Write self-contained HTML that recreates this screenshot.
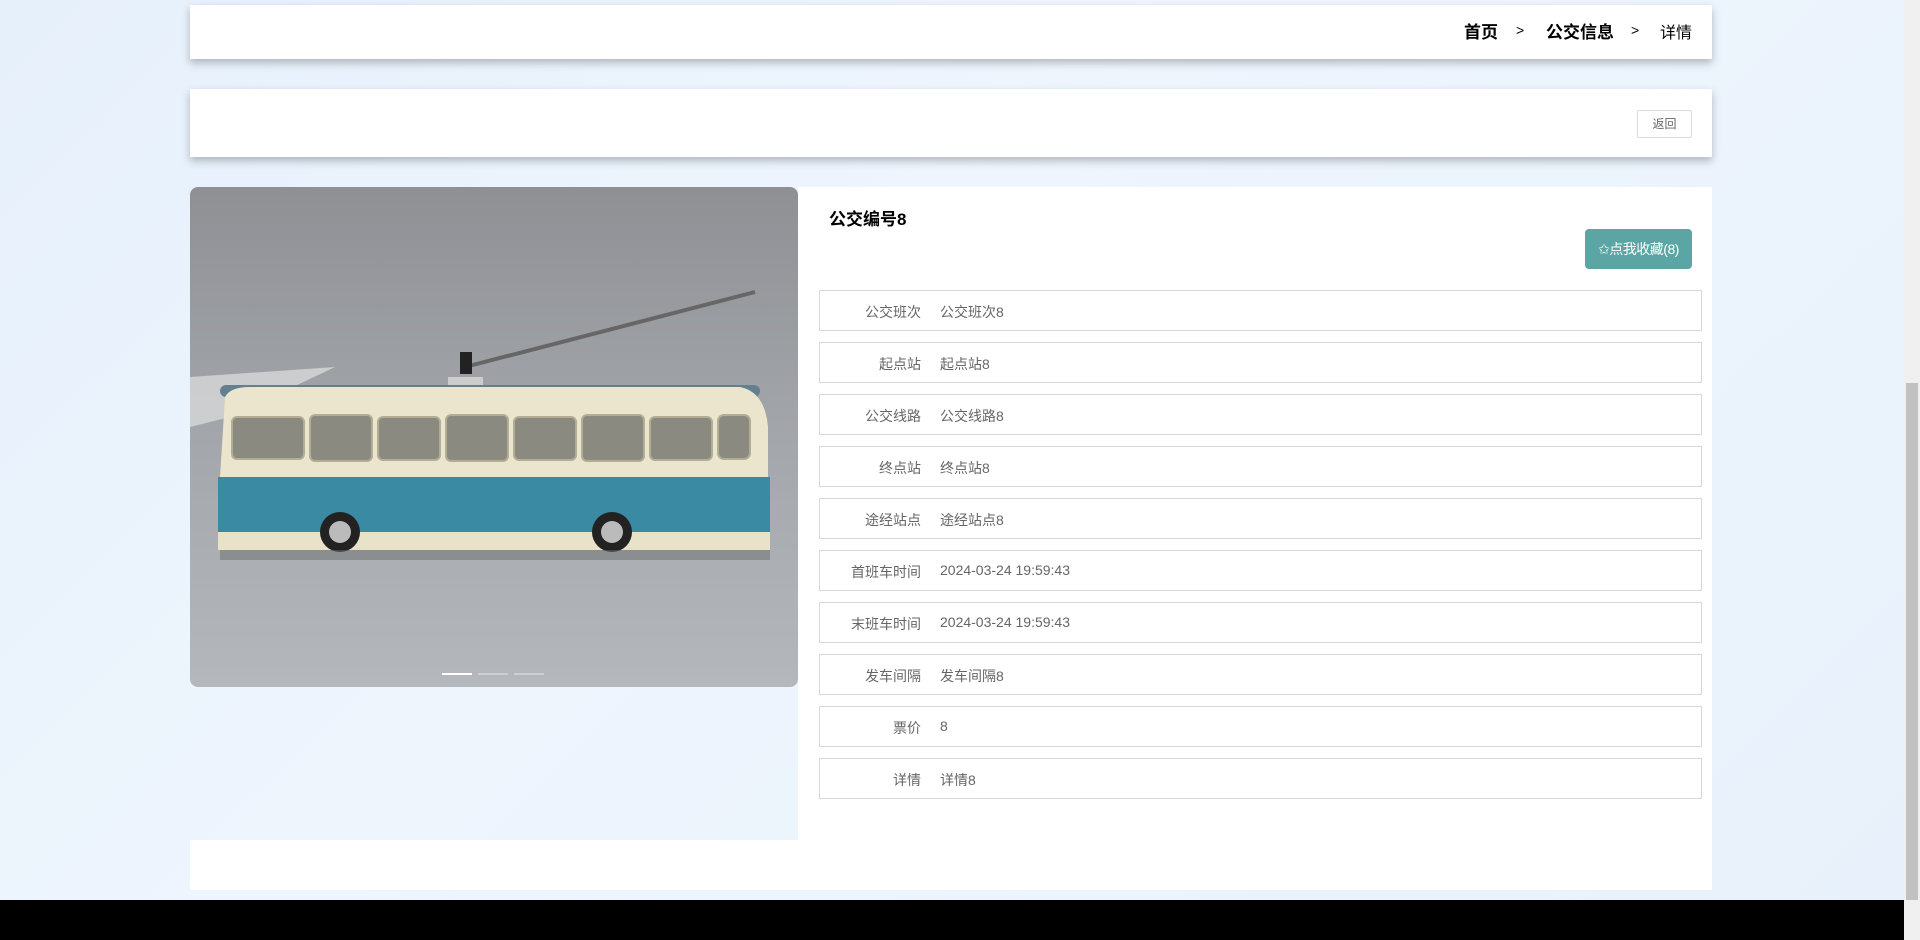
<!DOCTYPE html>
<html><head><meta charset="utf-8"><style>
*{margin:0;padding:0;box-sizing:border-box}
body{width:1920px;height:940px;overflow:hidden;position:relative;font-family:"Liberation Sans","Noto Sans CJK SC",sans-serif;background:linear-gradient(135deg,#e6f0fb 0%,#eef5fd 40%,#e8f1fb 100%)}
.panel{position:absolute;left:190px;width:1522px;background:#fff;box-shadow:0 4px 8px rgba(0,0,0,.25)}
.bc{top:5px;height:54px}
.bc span{position:absolute;top:13px;font-size:17px;color:#000}
.p2{top:89px;height:68px}
.ret{position:absolute;left:1447px;top:21px;width:55px;height:28px;border:1px solid #ddd;font-size:12px;color:#666;text-align:center;line-height:26px;border-radius:2px}
.img{position:absolute;left:190px;top:187px;width:608px;height:500px;border-radius:8px;overflow:hidden;background:linear-gradient(#8e9094,#a3a6aa 50%,#b4b8bd)}
.right{position:absolute;left:798px;top:187px;width:914px;height:653px;background:#fff}
.bot{position:absolute;left:190px;top:840px;width:1522px;height:50px;background:#fff}
.title{position:absolute;left:31px;top:18px;font-size:17px;font-weight:bold;color:#000}
.fav{position:absolute;left:787px;top:42px;width:107px;height:40px;background:#5ba6a4;color:#fff;border-radius:4px;font-size:14px;text-align:center;line-height:40px;letter-spacing:-.5px}
.row{position:absolute;left:21px;width:883px;height:41px;border:1px solid #d8d8d8}
.row .l{position:absolute;right:780px;top:11px;font-size:14px;color:#666;white-space:nowrap}
.row .v{position:absolute;left:120px;top:11px;font-size:14px;color:#666;white-space:nowrap}
.foot{position:absolute;left:0;top:900px;width:1904px;height:40px;background:#000}
.sb{position:absolute;left:1904px;top:0;width:16px;height:940px;background:#f0f0f0}
.th{position:absolute;left:1906px;top:383px;width:12px;height:517px;background:#c1c1c1}
</style></head><body>
<div class="panel bc"><span style="left:1274px;font-weight:bold">首页</span><span style="left:1326px;font-size:14px;top:17px">&gt;</span><span style="left:1356px;font-weight:bold">公交信息</span><span style="left:1441px;font-size:14px;top:17px">&gt;</span><span style="left:1470px;font-size:16px;top:14px">详情</span></div>
<div class="panel p2"><div class="ret">返回</div></div>
<div class="img"><svg width="608" height="500" viewBox="0 0 608 500">
<polygon points="0,190 145,180 40,230 0,240" fill="#e0e0e0" opacity=".7"/>
<line x1="275" y1="180" x2="565" y2="105" stroke="#666" stroke-width="4"/>
<rect x="270" y="165" width="12" height="22" fill="#222"/>
<rect x="258" y="190" width="35" height="12" fill="#ccc"/>
<rect x="30" y="198" width="540" height="12" rx="6" fill="#62808f"/>
<path d="M35 210 Q40 200 60 200 L550 200 Q575 205 578 240 L578 290 L30 290 Z" fill="#eae5cc"/>
<g fill="#8a8a80" stroke="#b2ad95" stroke-width="2"><rect x="42" y="230" width="72" height="42" rx="5"/><rect x="120" y="228" width="62" height="46" rx="5"/><rect x="188" y="230" width="62" height="43" rx="5"/><rect x="256" y="228" width="62" height="46" rx="5"/><rect x="324" y="230" width="62" height="43" rx="5"/><rect x="392" y="228" width="62" height="46" rx="5"/><rect x="460" y="230" width="62" height="43" rx="5"/><rect x="528" y="228" width="32" height="44" rx="6"/></g>
<path d="M28 290 L580 290 L580 345 L28 345 Z" fill="#3b8aa3"/>
<rect x="28" y="345" width="552" height="18" fill="#e8e2c8"/>
<circle cx="150" cy="345" r="20" fill="#222"/><circle cx="150" cy="345" r="11" fill="#bbb"/>
<circle cx="422" cy="345" r="20" fill="#222"/><circle cx="422" cy="345" r="11" fill="#bbb"/>
<rect x="30" y="363" width="550" height="10" fill="#6b6d70" opacity=".5"/>
<rect x="252" y="486" width="30" height="2" fill="#fff"/><rect x="288" y="486" width="30" height="2" fill="#ddd" opacity=".6"/><rect x="324" y="486" width="30" height="2" fill="#ddd" opacity=".6"/>
</svg></div>
<div class="right">
<div class="title">公交编号8</div>
<div class="fav">✩点我收藏(8)</div>
<div class="row" style="top:103px"><span class="l">公交班次</span><span class="v">公交班次8</span></div>
<div class="row" style="top:155px"><span class="l">起点站</span><span class="v">起点站8</span></div>
<div class="row" style="top:207px"><span class="l">公交线路</span><span class="v">公交线路8</span></div>
<div class="row" style="top:259px"><span class="l">终点站</span><span class="v">终点站8</span></div>
<div class="row" style="top:311px"><span class="l">途经站点</span><span class="v">途经站点8</span></div>
<div class="row" style="top:363px"><span class="l">首班车时间</span><span class="v">2024-03-24 19:59:43</span></div>
<div class="row" style="top:415px"><span class="l">末班车时间</span><span class="v">2024-03-24 19:59:43</span></div>
<div class="row" style="top:467px"><span class="l">发车间隔</span><span class="v">发车间隔8</span></div>
<div class="row" style="top:519px"><span class="l">票价</span><span class="v">8</span></div>
<div class="row" style="top:571px"><span class="l">详情</span><span class="v">详情8</span></div>
</div>
<div class="bot"></div>
<div class="foot"></div>
<div class="sb"></div><div class="th"></div>
</body></html>
